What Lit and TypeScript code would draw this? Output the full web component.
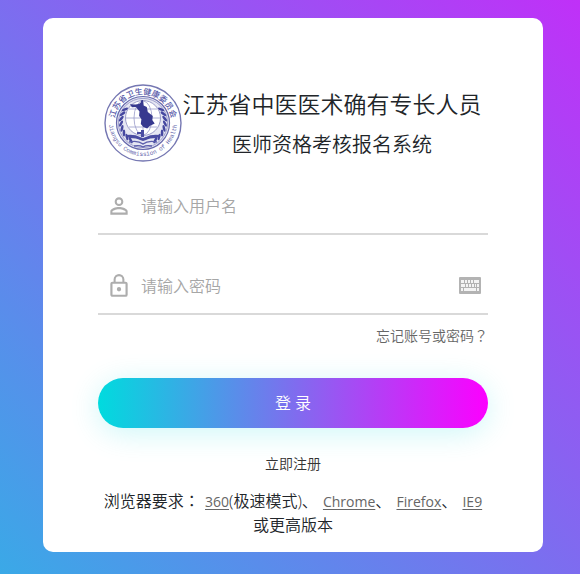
import { LitElement, html, css, svg } from "lit";
import { customElement } from "lit/decorators.js";

const LEAVES = [0, 1, 2, 3, 4, 5, 6, 7];

@customElement("health-emblem")
class HealthEmblem extends LitElement {
  static styles = css`
    :host {
      display: block;
    }
    svg {
      display: block;
      width: 100%;
    }
    .cn {
      font: 500 8px "Noto Sans CJK SC", sans-serif;
    }
    .en {
      font: 6px "Liberation Mono", monospace;
    }
  `;

  private leaf(i: number, side: number) {
    const a = ((146 - i * 13) * Math.PI) / 180;
    const x = 39 + side * 22 * Math.sin(a);
    const y = 38 - 22 * Math.cos(a);
    const turn = side * (146 - i * 13 - 30);
    return svg`<ellipse cx=${x} cy=${y} rx="3.4" ry="1.3" transform="rotate(${turn} ${x} ${y})" />`;
  }

  render() {
    return html`
      <svg viewBox="0 0 78 78" role="img" aria-label="江苏省卫生健康委员会">
        <defs>
          <path id="top" d="M10.5 39A28.5 28.5 0 0 1 67.5 39" />
          <path id="bottom" d="M5 38A34 34 0 0 0 73 38" />
        </defs>
        <circle cx="39" cy="39" r="38" fill="#fff" stroke="#7577b2" stroke-width="1.4" />
        <circle cx="39" cy="39" r="26.5" fill="#e6e7f3" stroke="#6668ac" stroke-width="1.2" />
        <circle cx="39" cy="39" r="24.6" fill="none" stroke="#8a8cc1" stroke-width=".8" />
        <g fill="#4547a0">
          ${LEAVES.map((i) => this.leaf(i, 1))} ${LEAVES.map((i) => this.leaf(i, -1))}
        </g>
        <circle cx="39" cy="34" r="17.5" fill="#fff" stroke="#8587bc" stroke-width=".8" />
        <g fill="none" stroke="#9a9cca" stroke-width=".8">
          <path d="M39 17V51M22 34H56M25 25H53M25 43H53" />
          <ellipse cx="39" cy="34" rx="9" ry="17" />
        </g>
        <path
          d="M37.500 16h1.400l.7 5.500 3.200 1.500 1 5 5 4-.6 4 2.500 3.500-5 2.500-2.500 2.500-3.800-1.400-2.600-3 .6-4.800-2.300-3.600.4-4.200-3.600-4.600-4 .4-2-3 5.500.3 3.400-.6 1.800-1.200z"
          fill="#37398f"
        />
        <path
          d="M22 51q9-1 14 2l3 1 3-1q5-3 14-2l-3 3q-8 0-11 2l-3 1-3-1q-3-2-11-2z"
          fill="#4a4ca2"
        />
        <path d="M33 48h4v-2h3v7h-3v-3h-4z" fill="#4a4ca2" />
        <path d="M25 58q9-2 14 2 5-4 14-2M30 62q6-1 9 1 3-2 9-1" fill="none" stroke="#5c5eac" stroke-width="1.400" />
        <text class="cn" fill="#5557a8" text-anchor="middle">
          <textPath href="#top" startOffset="50%">江苏省卫生健康委员会</textPath>
        </text>
        <text class="en" fill="#6163aa" text-anchor="middle">
          <textPath href="#bottom" startOffset="50%">Jiangsu Commission of Health</textPath>
        </text>
      </svg>
    `;
  }
}

@customElement("app-root")
class AppRoot extends LitElement {
  static styles = css`
    :host {
      display: block;
      box-sizing: border-box;
      min-height: 100vh;
      padding: 18px 37px 22px 43px;
      background: linear-gradient(45deg, #3aa9e7, #c030f8);
      font: 350 16px/24px "Open Sans", "Noto Sans CJK SC", sans-serif;
      color: #212529;
    }
    * {
      box-sizing: border-box;
    }
    .card {
      max-width: 500px;
      margin: 0 auto;
      padding: 66px 55px 15px;
      border-radius: 10px;
      background: #fff;
    }
    .brand {
      display: flex;
      padding: 0 6px;
      height: 94px;
    }
    .logo {
      flex: none;
      width: 78px;
    }
    .titles {
      flex: 1;
      text-align: center;
      white-space: nowrap;
    }
    h1,
    h2 {
      margin: 0;
      font-weight: 350;
    }
    h1 {
      font-size: 23px;
      line-height: 40px;
    }
    h2 {
      font-size: 20px;
      line-height: 42px;
    }
    .field {
      display: flex;
      align-items: center;
      height: 57px;
      margin-bottom: 23px;
      padding: 0 7px 0 8px;
      border-bottom: 2px solid #d9d9d9;
    }
    .field.last {
      margin-bottom: 8px;
    }
    .icon {
      flex: none;
      width: 26px;
      height: 26px;
      fill: #adadad;
    }
    .input {
      flex: 1;
      min-width: 0;
      height: 55px;
      padding: 0 9px;
      border: 0;
      outline: 0;
      background: none;
      font: inherit;
      color: #333;
    }
    .input::placeholder {
      color: #a6a6a6;
      opacity: 1;
    }
    .keyboard {
      padding: 0;
      border: 0;
      background: none;
    }
    .keyboard svg {
      display: block;
      width: 22px;
      height: 17px;
    }
    .forgot {
      display: block;
      margin-bottom: 30px;
      font-size: 14px;
      text-align: right;
      color: #666;
      text-decoration: none;
    }
    .wide {
      font-family: "Noto Sans CJK TC", sans-serif;
    }
    .login {
      display: block;
      width: 100%;
      height: 50px;
      border: 0;
      border-radius: 25px;
      background: linear-gradient(90deg, #00dbde, #fc00ff);
      box-shadow: 0 5px 30px rgba(3, 216, 222, 0.2);
      font: inherit;
      color: #fff;
    }
    .register {
      display: block;
      margin: 24px 0 12px;
      font-size: 14px;
      text-align: center;
      color: #333;
      text-decoration: none;
    }
    .browsers {
      margin: 0;
      text-align: center;
    }
    .browsers a {
      margin-left: 1px;
      font-size: 14px;
      font-weight: 400;
      line-height: 16px;
      color: #666;
      text-underline-offset: 2px;
    }
  `;

  render() {
    return html`
      <main class="card">
        <header class="brand">
          <health-emblem class="logo"></health-emblem>
          <div class="titles">
            <h1>江苏省中医医术确有专长人员</h1>
            <h2>医师资格考核报名系统</h2>
          </div>
        </header>
        <form @submit=${(e: Event) => e.preventDefault()}>
          <div class="field">
            <svg class="icon" viewBox="0 0 24 24" aria-hidden="true">
              <path
                d="M12 5.9a2.1 2.1 0 1 1 0 4.2 2.1 2.1 0 0 1 0-4.2m0 9c2.97 0 6.1 1.46 6.1 2.1v1.1H5.9V17c0-.64 3.13-2.1 6.1-2.1M12 4a4 4 0 1 0 0 8 4 4 0 0 0 0-8m0 9c-2.67 0-8 1.34-8 4v3h16v-3c0-2.66-5.33-4-8-4"
              />
            </svg>
            <input class="input" type="text" placeholder="请输入用户名" aria-label="用户名" />
          </div>
          <div class="field last">
            <svg class="icon" viewBox="0 0 24 24" aria-hidden="true">
              <path
                d="M12 17a2 2 0 1 0 0-4 2 2 0 0 0 0 4m6-9h-1V6A5 5 0 0 0 7 6v2H6a2 2 0 0 0-2 2v10c0 1.1.9 2 2 2h12a2 2 0 0 0 2-2V10a2 2 0 0 0-2-2M8.900 6a3.100 3.100 0 0 1 6.200 0v2H8.900zM18 20H6V10h12z"
              />
            </svg>
            <input class="input" type="password" placeholder="请输入密码" aria-label="密码" />
            <button class="keyboard" type="button" aria-label="软键盘">
              <svg viewBox="0 0 22 17">
                <rect width="22" height="17" rx="1" fill="#b3b3b3" />
                <path
                  d="M2 3h3v3H2zM6 3h2v3H6zM9 3h2v3H9zM12 3h2v3h-2zM15 3h5v3h-5zM2 7h4v3H2zM7 7h2v3H7zM10 7h2v3h-2zM13 7h2v3h-2zM16 7h1v3h-1zM18 7h2v3h-2zM2 11h2v3H2zM5 11h12v3H5zM18 11h2v3h-2z"
                  fill="#f4f4f4"
                />
              </svg>
            </button>
          </div>
          <a class="forgot" href="#">忘记账号或密码<span class="wide">？</span></a>
          <button class="login" type="submit">登 录</button>
        </form>
        <a class="register" href="#">立即注册</a>
        <p class="browsers">
          浏览器要求<span class="wide">：</span> <a href="#">360</a>(极速模式)、 <a href="#">Chrome</a>、
          <a href="#">Firefox</a>、 <a href="#">IE9</a> 或更高版本
        </p>
      </main>
    `;
  }
}
